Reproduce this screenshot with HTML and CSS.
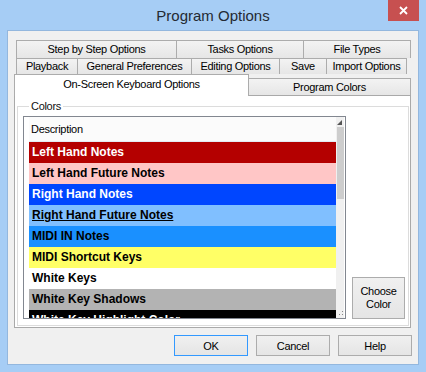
FILE: index.html
```html
<!DOCTYPE html>
<html lang="en">
<head>
    <meta charset="UTF-8">
    <title>Program Options</title>
    <link rel="stylesheet" href="styles.css">
</head>
<body>

<div class="window">
    <div class="titlebar">
        <span class="title">Program Options</span>
        <span class="close">
            <svg width="9" height="9" viewBox="0 0 9 9"><path d="M1 1L8 8M8 1L1 8" stroke="#fff" stroke-width="1.8"/></svg>
        </span>
    </div>

    <div class="client">
        <div class="tab-row row1">
            <div class="tab t-step">Step by Step Options</div>
            <div class="tab t-tasks">Tasks Options</div>
            <div class="tab t-files">File Types</div>
        </div>
        <div class="tab-row row2">
            <div class="tab t-play">Playback</div>
            <div class="tab t-general">General Preferences</div>
            <div class="tab t-edit">Editing Options</div>
            <div class="tab t-save">Save</div>
            <div class="tab t-import">Import Options</div>
        </div>
        <div class="tab-row row3">
            <div class="tab tab-active">On-Screen Keyboard Options</div>
            <div class="tab t-colors">Program Colors</div>
        </div>

        <div class="panel">
            <fieldset class="group">
                <legend>Colors</legend>
                <div class="group-body">
                    <div class="list">
                        <div class="list-body">
                            <div class="list-head">Description</div>
                            <div class="item c-left">Left Hand Notes</div>
                            <div class="item c-left-future">Left Hand Future Notes</div>
                            <div class="item c-right">Right Hand Notes</div>
                            <div class="item c-right-future">Right Hand Future Notes</div>
                            <div class="item c-midi">MIDI IN Notes</div>
                            <div class="item c-shortcut">MIDI Shortcut Keys</div>
                            <div class="item c-white">White Keys</div>
                            <div class="item c-shadow">White Key Shadows</div>
                            <div class="item c-black">White Key Highlight Color</div>
                        </div>
                        <div class="scrollbar">
                            <svg class="arrow" width="8" height="8" viewBox="0 0 8 8"><path d="M1 6L6 1L6 6Z" fill="#555"/></svg>
                            <div class="thumb"></div>
                            <svg class="grip" width="8" height="8" viewBox="0 0 8 8"><path d="M6 2h1v1h-1zM6 5h1v1h-1zM3 5h1v1h-1z" fill="#888"/></svg>
                        </div>
                    </div>
                    <button class="btn btn-choose">Choose<br>Color</button>
                </div>
            </fieldset>
        </div>

        <div class="buttons">
            <button class="btn btn-default">OK</button>
            <button class="btn">Cancel</button>
            <button class="btn">Help</button>
        </div>
    </div>
</div>

</body>
</html>
```

FILE: styles.css
```css
body {
    margin: 0;
    font-family: "Liberation Sans", Arial, sans-serif;
    font-size: 11px;
    letter-spacing: -0.3px;
    color: #000;
}

.window {
    width: 426px;
    height: 372px;
    background-color: #a6cdf5;
    overflow: hidden;
}

.titlebar {
    position: relative;
    height: 30px;
    text-align: center;
}

.title {
    display: inline-block;
    margin-top: 1px;
    font-size: 15px;
    line-height: 30px;
    letter-spacing: 0;
    color: #242a33;
}

.close {
    position: absolute;
    top: 0;
    right: 7px;
    width: 31px;
    height: 21px;
    background-color: #c75050;
    display: flex;
    align-items: center;
    justify-content: center;
}

.client {
    margin-left: 7px;
    width: 412px;
    height: 335px;
    box-sizing: border-box;
    border: 1px solid #93b7de;
    background-color: #f0f0f0;
    padding-top: 9px;
}

/* tabs */

.tab-row {
    display: flex;
    align-items: flex-start;
}

.row1 {
    margin-left: 8px;
    height: 18px;
}

.row2 {
    margin-left: 8px;
    height: 16px;
}

.row3 {
    margin-left: 6px;
    height: 21px;
}

.tab {
    box-sizing: border-box;
    height: 100%;
    border: 1px solid #acacac;
    border-bottom: none;
    background: linear-gradient(#f3f3f3, #e6e6e6);
    text-align: center;
    line-height: 16px;
    margin-left: -1px;
}

.tab:first-child {
    margin-left: 0;
}

.row2 .tab {
    line-height: 15px;
}

.t-step { width: 161px; }
.t-tasks { width: 128px; }
.t-files { width: 108px; }

.t-play { width: 62px; }
.t-general { width: 115px; }
.t-edit { width: 89px; }
.t-save { width: 48px; }
.t-import { width: 81px; }

.tab-active {
    position: relative;
    z-index: 1;
    width: 235px;
    height: 22px;
    background: #fff;
    line-height: 19px;
}

.t-colors {
    width: 163px;
    height: 17px;
    margin-top: 4px;
    line-height: 16px;
}

/* panel */

.panel {
    margin-left: 6px;
    width: 397px;
    height: 233px;
    box-sizing: border-box;
    border: 1px solid #a9a9a9;
    background-color: #fff;
    padding: 3px 1px 0 2px;
}

.group {
    margin: 0;
    border: 1px solid #dcdcdc;
    padding: 3px 3px 6px 5px;
}

.group legend {
    margin-left: 6px;
    padding: 0 2px;
    line-height: 14px;
    color: #111;
}

.group-body {
    display: flex;
    align-items: flex-end;
    gap: 6px;
}

.list {
    width: 323px;
    height: 203px;
    box-sizing: border-box;
    border: 1px solid #828790;
    display: flex;
    padding: 0 1px 0 5px;
}

.list-body {
    flex: 1;
    overflow: hidden;
}

.list-head {
    height: 25px;
    box-sizing: border-box;
    border-bottom: 1px solid #e3ebf3;
    background-color: #fbfbfb;
    line-height: 24px;
    padding-left: 2px;
}

.item {
    height: 21px;
    line-height: 21px;
    padding-left: 3px;
    font-size: 12px;
    font-weight: bold;
    letter-spacing: 0;
    white-space: nowrap;
}

.c-left { background-color: #b40000; color: #fff; }
.c-left-future { background-color: #ffc6c6; }
.c-right { background-color: #0046ff; color: #fff; }
.c-right-future { background-color: #80bfff; text-decoration: underline; }
.c-midi { background-color: #1a90ff; }
.c-shortcut { background-color: #ffff66; }
.c-white { background-color: #fff; }
.c-shadow { background-color: #b3b3b3; }
.c-black { background-color: #000; color: #fff; }

.scrollbar {
    width: 8px;
    background-color: #f0f0f0;
    display: flex;
    flex-direction: column;
    align-items: center;
}

.scrollbar .arrow {
    margin-top: 2px;
}

.thumb {
    margin-top: 0;
    width: 7px;
    height: 72px;
    background-color: #cdcdcd;
}

.scrollbar .grip {
    margin-top: auto;
    margin-bottom: 1px;
}

/* buttons */

.btn {
    box-sizing: border-box;
    border: 1px solid #acacac;
    background: linear-gradient(#f0f0f0, #e5e5e5);
    font-family: "Liberation Sans", Arial, sans-serif;
    font-size: 11px;
    letter-spacing: -0.3px;
    color: #000;
    padding: 0;
}

.btn-choose {
    width: 53px;
    height: 42px;
    line-height: 13px;
}

.buttons {
    display: flex;
    justify-content: flex-end;
    gap: 8px;
    margin-top: 7px;
    padding-right: 6px;
}

.buttons .btn {
    width: 74px;
    height: 21px;
}

.btn-default {
    border-color: #3399ff;
}
```
